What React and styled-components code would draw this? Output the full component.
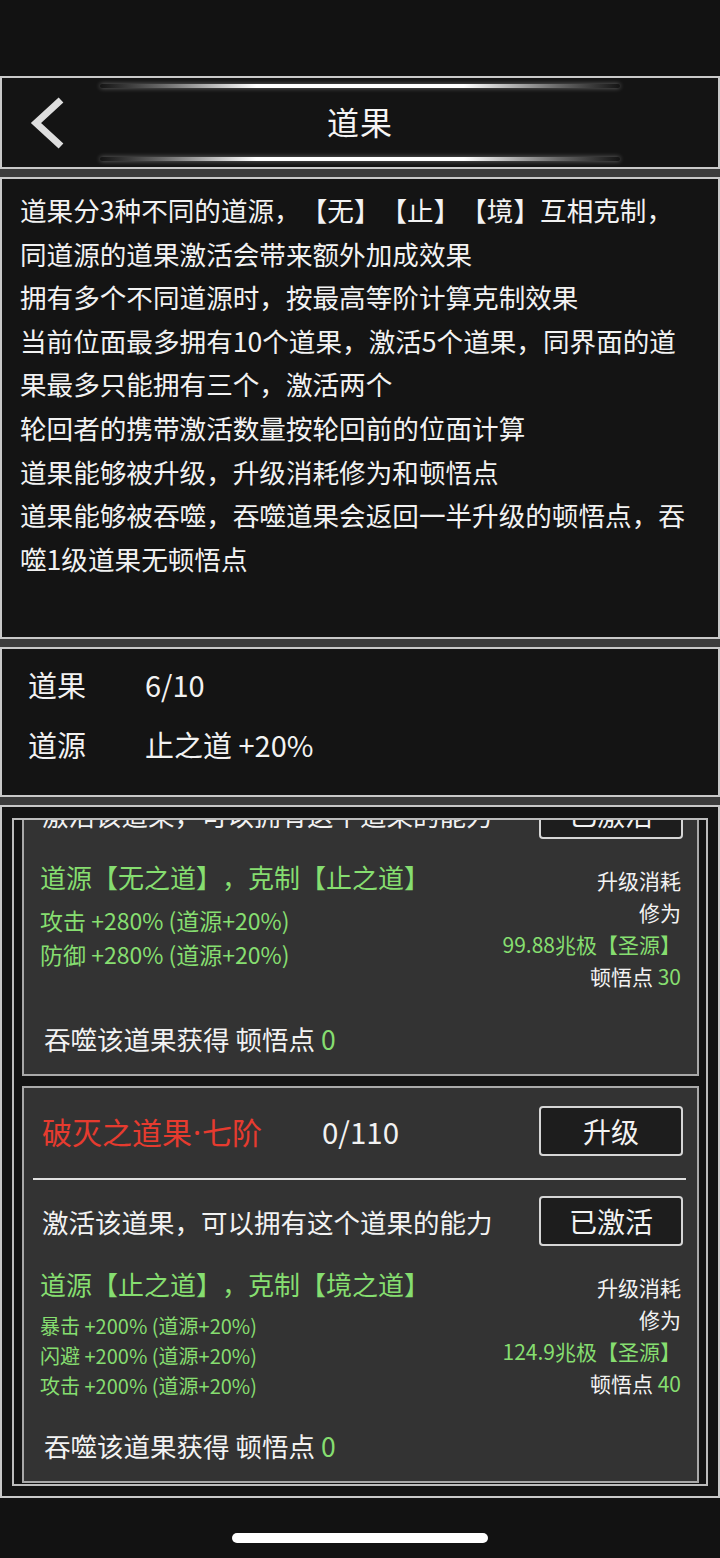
import React, { useLayoutEffect, useRef } from "react";
import styled, { createGlobalStyle } from "styled-components";

const GREEN = "#86de70";
const RED = "#e63b2f";

const INFO_LINES = [
  "道果分3种不同的道源，【无】【止】【境】互相克制，",
  "同道源的道果激活会带来额外加成效果",
  "拥有多个不同道源时，按最高等阶计算克制效果",
  "当前位面最多拥有10个道果，激活5个道果，同界面的道",
  "果最多只能拥有三个，激活两个",
  "轮回者的携带激活数量按轮回前的位面计算",
  "道果能够被升级，升级消耗修为和顿悟点",
  "道果能够被吞噬，吞噬道果会返回一半升级的顿悟点，吞",
  "噬1级道果无顿悟点",
];

const FRUITS = [
  {
    key: "wu",
    name: "虚无之道果",
    rank: "七阶",
    progress: "0/110",
    source: "道源【无之道】，克制【止之道】",
    stats: ["攻击 +280% (道源+20%)", "防御 +280% (道源+20%)"],
    cost: "99.88兆极【圣源】",
    points: 30,
    devour: 0,
  },
  {
    key: "po",
    name: "破灭之道果",
    rank: "七阶",
    progress: "0/110",
    source: "道源【止之道】，克制【境之道】",
    stats: [
      "暴击 +200% (道源+20%)",
      "闪避 +200% (道源+20%)",
      "攻击 +200% (道源+20%)",
    ],
    cost: "124.9兆极【圣源】",
    points: 40,
    devour: 0,
  },
];

const GlobalStyle = createGlobalStyle`
  html, body {
    margin: 0;
    padding: 0;
    background: #121212;
  }
  body {
    font-family: "Noto Sans CJK SC", "Noto Sans", sans-serif;
    color: #f2f2f2;
    text-spacing-trim: space-all;
  }
  * {
    box-sizing: border-box;
  }
`;

const Page = styled.div`
  width: 720px;
  height: 1558px;
  display: flex;
  flex-direction: column;
  background: #121212;
  overflow: hidden;
`;

const StatusArea = styled.div`
  height: 76px;
  flex-shrink: 0;
`;

const Stack = styled.div`
  display: flex;
  flex-direction: column;
  gap: 8px;
  background: #3c3c3c;
`;

const Panel = styled.section`
  height: ${({ h }) => h}px;
  background: #141414;
  border: 2px solid #c9c9c9;
  flex-shrink: 0;
`;

const Header = styled(Panel)`
  display: flex;
  flex-direction: column;
  align-items: center;
  padding-top: 6px;
`;

const GlowLine = styled.div`
  width: 520px;
  height: 4px;
  border-radius: 2px;
  background: linear-gradient(
    90deg,
    rgba(255, 255, 255, 0) 0%,
    rgba(190, 190, 190, 0.5) 12%,
    #ffffff 30%,
    #ffffff 70%,
    rgba(190, 190, 190, 0.5) 88%,
    rgba(255, 255, 255, 0) 100%
  );
  box-shadow: 0 0 5px rgba(255, 255, 255, 0.4);
`;

const TitleRow = styled.div`
  width: 100%;
  height: 69px;
  display: grid;
  grid-template-columns: 1fr auto 1fr;
  align-items: center;
`;

const BackButton = styled.button`
  justify-self: start;
  margin-left: 26px;
  padding: 0;
  border: none;
  background: none;
  cursor: pointer;
  display: flex;
`;

const Title = styled.h1`
  margin: 0 0 4px;
  font-size: 32px;
  font-weight: 400;
  color: #f5f5f5;
  letter-spacing: 1px;
`;

const InfoPanel = styled(Panel)`
  padding: 9px 18px;
`;

const InfoLine = styled.p`
  margin: 0;
  font-size: 26.6px;
  line-height: 43.6px;
  white-space: nowrap;
`;

const StatsPanel = styled(Panel)`
  padding: 5px 26px;
`;

const StatRow = styled.div`
  display: grid;
  grid-template-columns: 117px 1fr;
  height: 60px;
  align-items: center;
  font-size: 29px;
`;

const ListPanel = styled(Panel)`
  padding: 11px 10px 10px 10px;
`;

const ScrollFrame = styled.div`
  height: 100%;
  border: 2px solid #bdbdbd;
  overflow-y: auto;
  scrollbar-width: none;
  &::-webkit-scrollbar {
    display: none;
  }
`;

const CardList = styled.div`
  display: flex;
  flex-direction: column;
  gap: 10px;
  padding: 8px 7px 1px 8px;
`;

const Card = styled.article`
  height: 397px;
  background: #333333;
  border: 2px solid #a9a9a9;
  display: flex;
  flex-direction: column;
  padding: 18px 14px 18px 18px;
`;

const TopRow = styled.div`
  display: grid;
  grid-template-columns: 280px 1fr auto;
  align-items: center;
  font-size: 29.5px;
`;

const FruitName = styled.span`
  color: ${RED};
  font-size: 30px;
  white-space: nowrap;
`;

const Dot = styled.span`
  font-family: "Noto Sans", "DejaVu Sans", sans-serif;
  margin: 0 1px;
`;

const Button = styled.button`
  width: 144px;
  height: 50px;
  border: 2px solid #d6d6d6;
  border-radius: 4px;
  background: #1d1d1d;
  color: #f2f2f2;
  font-family: inherit;
  font-size: 28px;
  padding: 0;
  cursor: pointer;
`;

const Divider = styled.hr`
  margin: 22px 0 0 -9px;
  width: 653px;
  height: 2px;
  border: none;
  background: #e0e0e0;
`;

const ActivateRow = styled.div`
  margin-top: 16px;
  display: flex;
  align-items: center;
  justify-content: space-between;
  font-size: 26.5px;
`;

const Body = styled.div`
  display: flex;
  justify-content: space-between;
  align-items: flex-start;
  padding-right: 2px;
`;

const Effects = styled.div`
  padding-top: 21px;
  margin-left: -2px;
  color: ${GREEN};
`;

const Source = styled.div`
  font-size: 26px;
  line-height: 34px;
  white-space: nowrap;
`;

const EffectList = styled.div`
  margin-top: ${({ compact }) => (compact ? 10 : 9)}px;
  font-size: ${({ compact }) => (compact ? 20 : 23)}px;
  line-height: ${({ compact }) => (compact ? 30 : 34)}px;
  white-space: nowrap;
`;

const Cost = styled.div`
  padding-top: 25px;
  text-align: right;
  font-size: 21px;
  line-height: 32px;
  white-space: nowrap;
`;

const Green = styled.span`
  color: ${GREEN};
`;

const Devour = styled.div`
  margin-top: auto;
  margin-left: 2px;
  font-size: 26.5px;
  line-height: 34px;
`;

const HomeArea = styled.div`
  flex: 1;
  display: flex;
  justify-content: center;
  padding-top: 35px;
`;

const HomeBar = styled.div`
  width: 256px;
  height: 10px;
  border-radius: 5px;
  background: #ffffff;
`;

function BackIcon() {
  return (
    <svg width="40" height="54" viewBox="0 0 40 54" fill="none">
      <path
        d="M33 4 L8 27 L33 50"
        stroke="#dedede"
        strokeWidth="7"
        strokeLinecap="butt"
        strokeLinejoin="miter"
      />
    </svg>
  );
}

function FruitCard({ fruit }) {
  const compact = fruit.stats.length > 2;
  return (
    <Card>
      <TopRow>
        <FruitName>
          {fruit.name}
          <Dot>·</Dot>
          {fruit.rank}
        </FruitName>
        <span>{fruit.progress}</span>
        <Button>升级</Button>
      </TopRow>
      <Divider />
      <ActivateRow>
        <span>激活该道果，可以拥有这个道果的能力</span>
        <Button>已激活</Button>
      </ActivateRow>
      <Body>
        <Effects>
          <Source>{fruit.source}</Source>
          <EffectList compact={compact}>
            {fruit.stats.map((s) => (
              <div key={s}>{s}</div>
            ))}
          </EffectList>
        </Effects>
        <Cost>
          <div>升级消耗</div>
          <div>修为</div>
          <Green as="div">{fruit.cost}</Green>
          <div>
            顿悟点 <Green>{fruit.points}</Green>
          </div>
        </Cost>
      </Body>
      <Devour>
        吞噬该道果获得 顿悟点 <Green>{fruit.devour}</Green>
      </Devour>
    </Card>
  );
}

export default function App() {
  const frameRef = useRef(null);

  // the list is shown scrolled to the bottom
  useLayoutEffect(() => {
    const el = frameRef.current;
    if (el) el.scrollTop = el.scrollHeight;
  }, []);

  return (
    <Page>
      <GlobalStyle />
      <StatusArea />
      <Stack>
        <Header h={93}>
          <GlowLine />
          <TitleRow>
            <BackButton aria-label="返回">
              <BackIcon />
            </BackButton>
            <Title>道果</Title>
            <span />
          </TitleRow>
          <GlowLine />
        </Header>

        <InfoPanel h={462}>
          {INFO_LINES.map((line) => (
            <InfoLine key={line}>{line}</InfoLine>
          ))}
        </InfoPanel>

        <StatsPanel h={150}>
          <StatRow>
            <span>道果</span>
            <span>6/10</span>
          </StatRow>
          <StatRow>
            <span>道源</span>
            <span>止之道 +20%</span>
          </StatRow>
        </StatsPanel>

        <ListPanel h={693}>
          <ScrollFrame ref={frameRef}>
            <CardList>
              {FRUITS.map((f) => (
                <FruitCard key={f.key} fruit={f} />
              ))}
            </CardList>
          </ScrollFrame>
        </ListPanel>
      </Stack>
      <HomeArea>
        <HomeBar />
      </HomeArea>
    </Page>
  );
}
